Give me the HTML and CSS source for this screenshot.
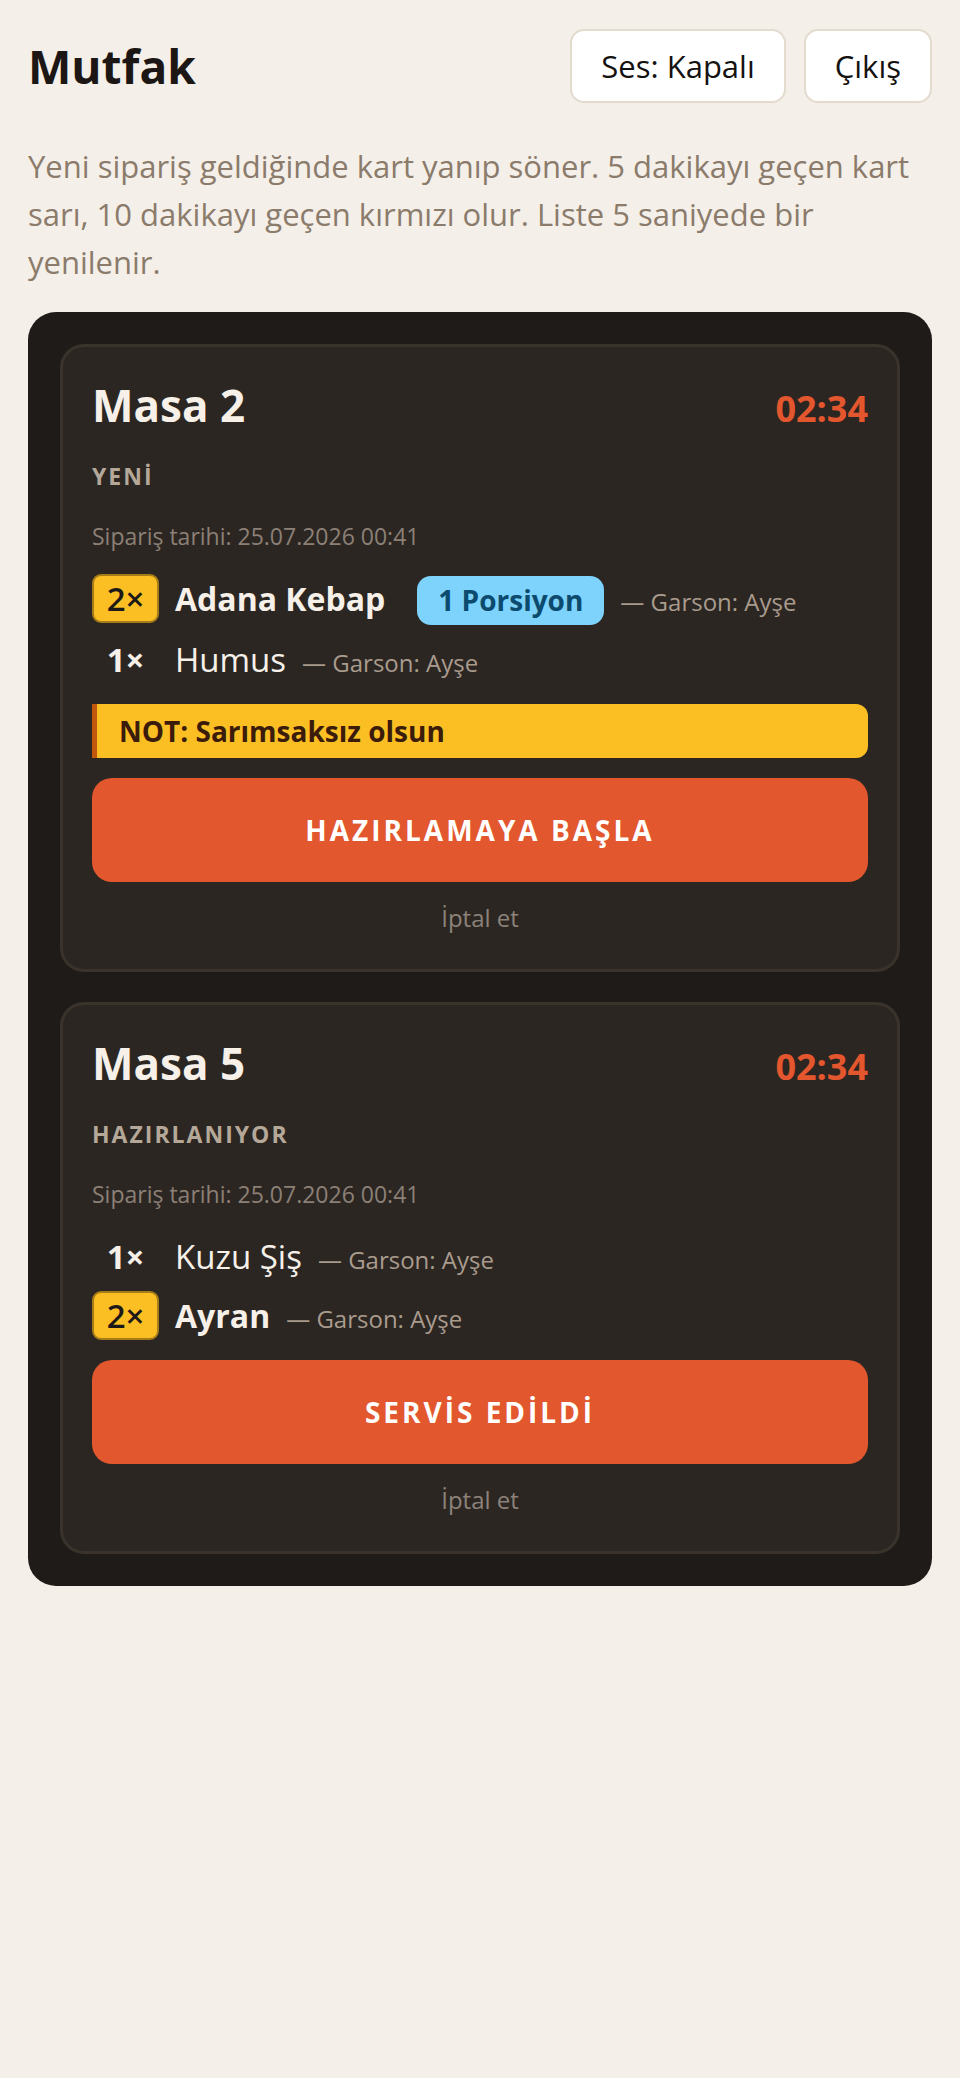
FILE: index.html
```html
<!DOCTYPE html>
<html lang="tr">
<head>
<meta charset="utf-8">
<title>Mutfak</title>
<link rel="stylesheet" href="styles.css">
</head>
<body>
<main class="page">
  <header class="topbar">
    <h1 class="title">Mutfak</h1>
    <div class="actions">
      <button class="btn-light" type="button">Ses: Kapalı</button>
      <button class="btn-light" type="button">Çıkış</button>
    </div>
  </header>
  <p class="intro">Yeni sipariş geldiğinde kart yanıp söner. 5 dakikayı geçen kart sarı, 10 dakikayı geçen kırmızı olur. Liste 5 saniyede bir yenilenir.</p>
  <section class="board">
    <article class="order">
      <div class="order-head">
        <h2 class="order-table">Masa 2</h2>
        <span class="order-timer">02:34</span>
      </div>
      <div class="order-status">YENİ</div>
      <div class="order-date">Sipariş tarihi: 25.07.2026 00:41</div>
      <ul class="items">
        <li class="item item-multi">
          <span class="qty qty-badge">2×</span>
          <span class="item-name">Adana Kebap</span>
          <span class="portion">1 Porsiyon</span>
          <span class="waiter">— Garson: Ayşe</span>
        </li>
        <li class="item">
          <span class="qty">1×</span>
          <span class="item-name">Humus</span>
          <span class="waiter">— Garson: Ayşe</span>
        </li>
      </ul>
      <div class="note">NOT: Sarımsaksız olsun</div>
      <button class="btn-primary" type="button">HAZIRLAMAYA BAŞLA</button>
      <button class="btn-cancel" type="button">İptal et</button>
    </article>
    <article class="order">
      <div class="order-head">
        <h2 class="order-table">Masa 5</h2>
        <span class="order-timer">02:34</span>
      </div>
      <div class="order-status">HAZIRLANIYOR</div>
      <div class="order-date">Sipariş tarihi: 25.07.2026 00:41</div>
      <ul class="items">
        <li class="item">
          <span class="qty">1×</span>
          <span class="item-name">Kuzu Şiş</span>
          <span class="waiter">— Garson: Ayşe</span>
        </li>
        <li class="item item-multi">
          <span class="qty qty-badge">2×</span>
          <span class="item-name">Ayran</span>
          <span class="waiter">— Garson: Ayşe</span>
        </li>
      </ul>
      <button class="btn-primary" type="button">SERVİS EDİLDİ</button>
      <button class="btn-cancel" type="button">İptal et</button>
    </article>
  </section>
</main>
</body>
</html>
```

FILE: styles.css
```css
* {
  box-sizing: border-box;
}

body {
  margin: 0;
  background: #f4efe9;
  font-family: "Open Sans", "Noto Sans", sans-serif;
  color: #1c1917;
}

.page {
  padding: 29px 28px 40px;
}

.topbar {
  display: flex;
  justify-content: space-between;
  align-items: center;
  height: 74px;
}

.title {
  margin: 0;
  font-size: 46px;
  line-height: 1;
  font-weight: 700;
  color: #1c1714;
}

.actions {
  display: flex;
  gap: 18px;
}

.btn-light {
  font: inherit;
  font-size: 31px;
  line-height: 42px;
  padding: 14px 29px;
  background: #ffffff;
  border: 2px solid #e4dbcf;
  border-radius: 14px;
  color: #141210;
}

.intro {
  margin: 39px 0 0;
  font-size: 31px;
  line-height: 48px;
  color: #8b7b6b;
}

.board {
  margin-top: 26px;
  background: #1f1b18;
  border-radius: 28px;
  padding: 32px;
  display: flex;
  flex-direction: column;
  gap: 30px;
}

.order {
  background: #2b2622;
  border: 3px solid #3a332c;
  border-radius: 24px;
  padding: 32px 29px 36px;
  display: flex;
  flex-direction: column;
}

.order-head {
  display: flex;
  justify-content: space-between;
  align-items: baseline;
}

.order-table {
  margin: 0;
  font-size: 44px;
  line-height: 52px;
  font-weight: 700;
  color: #f6f0e9;
}

.order-timer {
  font-size: 36px;
  line-height: 52px;
  font-weight: 700;
  color: #e4572e;
}

.order-status {
  margin-top: 26px;
  font-size: 23px;
  line-height: 30px;
  font-weight: 700;
  letter-spacing: 2px;
  color: #b6a898;
}

.order-date {
  margin-top: 30px;
  font-size: 23px;
  line-height: 30px;
  color: #8c8076;
}

.items {
  list-style: none;
  margin: 23px 0 0;
  padding: 0;
  display: flex;
  flex-direction: column;
  gap: 10px;
}

.item {
  display: flex;
  align-items: baseline;
  gap: 16px;
}

.qty {
  width: 67px;
  height: 49px;
  border: 2px solid transparent;
  border-radius: 9px;
  font-size: 33px;
  line-height: 45px;
  text-align: center;
  font-weight: 700;
  color: #f6f0e9;
}

.qty-badge {
  background: #fbbf24;
  border-color: #a57c17;
  color: #1c1917;
  font-weight: 600;
}

.item-name {
  font-size: 33px;
  line-height: 45px;
  color: #f6f0e9;
}

.item-multi .item-name {
  font-size: 32px;
  font-weight: 700;
}

.portion {
  margin-left: 16px;
  padding: 2px 21px;
  background: #7dd3fc;
  color: #0c4a6e;
  font-size: 28px;
  line-height: 45px;
  font-weight: 700;
  border-radius: 14px;
}

.waiter {
  font-size: 24px;
  line-height: 30px;
  color: #a99b8d;
}

.note {
  margin-top: 20px;
  padding: 0 22px;
  background: #fbbf24;
  border-left: 5px solid #c2580e;
  border-radius: 0 12px 12px 0;
  font-size: 28px;
  line-height: 54px;
  font-weight: 700;
  color: #3b1c0a;
}

.btn-primary {
  margin-top: 20px;
  width: 100%;
  font: inherit;
  font-size: 28px;
  line-height: 40px;
  font-weight: 700;
  letter-spacing: 3px;
  padding: 32px;
  background: #e2572d;
  color: #ffffff;
  border: 0;
  border-radius: 20px;
}

.btn-cancel {
  margin-top: 21px;
  align-self: center;
  font: inherit;
  font-size: 24px;
  line-height: 30px;
  padding: 0;
  background: none;
  border: 0;
  color: #8c8279;
}
```
